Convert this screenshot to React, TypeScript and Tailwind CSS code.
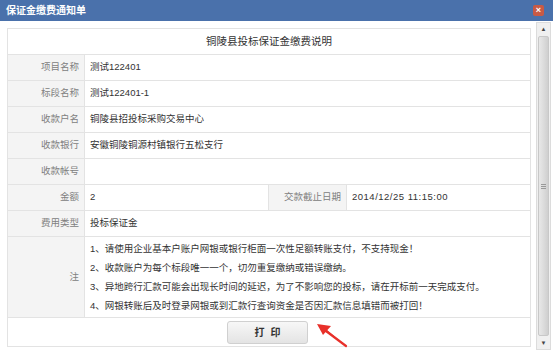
import React from "react"

const rows: { label: string; value: string }[] = [
    { label: "项目名称", value: "测试122401" },
    { label: "标段名称", value: "测试122401-1" },
    { label: "收款户名", value: "铜陵县招投标采购交易中心" },
    { label: "收款银行", value: "安徽铜陵铜源村镇银行五松支行" },
    { label: "收款帐号", value: "" },
]

const notes = [
    "1、请使用企业基本户账户网银或银行柜面一次性足额转账支付，不支持现金！",
    "2、收款账户为每个标段唯一一个，切勿重复缴纳或错误缴纳。",
    "3、异地跨行汇款可能会出现长时间的延迟，为了不影响您的投标，请在开标前一天完成支付。",
    "4、网银转账后及时登录网银或到汇款行查询资金是否因汇款信息填错而被打回！",
]

const labelCls = "bg-[#f4f4f4] text-[#808080] text-right pr-[5px] border border-[#e3e3e3] font-normal"
const valueCls = "text-[#333] pl-[5px] border border-[#e3e3e3]"

export default function App() {
    return (
        <div
            className="w-[553px] h-[352px] flex flex-col bg-white overflow-hidden relative"
            style={{ fontFamily: '"Liberation Sans", "Noto Sans CJK SC", sans-serif' }}
        >
            <div className="h-[21px] bg-[#4a71ab] flex items-center justify-between pl-[6px] pr-[9px] shrink-0">
                <span className="text-white text-[10px] font-bold">保证金缴费通知单</span>
                <span className="w-[11px] h-[11px] rounded-[2px] bg-[#c85a45] flex items-center justify-center text-white text-[9px] font-bold leading-none">
                    ×
                </span>
            </div>
            <div className="flex flex-1 min-h-0 bg-white">
                <div className="flex-1 pl-[7px] pt-[7px] pr-[5px]">
                    <table className="w-[524px] border-collapse text-[9.5px] table-fixed">
                        <colgroup>
                            <col className="w-[77px]" />
                            <col className="w-[184px]" />
                            <col className="w-[78px]" />
                            <col />
                        </colgroup>
                        <tbody>
                            <tr className="h-[26px]">
                                <td colSpan={4} className="text-center text-[#333] text-[10.5px] border border-[#e3e3e3]">
                                    铜陵县投标保证金缴费说明
                                </td>
                            </tr>
                            {rows.map((r) => (
                                <tr key={r.label} className="h-[26px]">
                                    <td className={labelCls}>{r.label}</td>
                                    <td colSpan={3} className={valueCls}>{r.value}</td>
                                </tr>
                            ))}
                            <tr className="h-[26px]">
                                <td className={labelCls}>金额</td>
                                <td className={valueCls}>2</td>
                                <td className={labelCls + " whitespace-nowrap"}>交款截止日期</td>
                                <td className={valueCls + " tracking-[0.5px]"}>2014/12/25 11:15:00</td>
                            </tr>
                            <tr className="h-[26px]">
                                <td className={labelCls}>费用类型</td>
                                <td colSpan={3} className={valueCls}>投标保证金</td>
                            </tr>
                            <tr className="h-[79px]">
                                <td className={labelCls}>注</td>
                                <td colSpan={3} className={valueCls + " py-[2px]"}>
                                    {notes.map((n) => (
                                        <div key={n} className="leading-[19px] whitespace-nowrap">{n}</div>
                                    ))}
                                </td>
                            </tr>
                            <tr className="h-[29px]">
                                <td colSpan={4} className="border border-[#e3e3e3]">
                                    <div className="flex justify-center">
                                        <button
                                            type="button"
                                            className="w-[81px] h-[23px] mr-[3px] rounded-[3px] border border-[#d0d0d0] bg-gradient-to-b from-[#f7f7f7] to-[#e4e4e4] text-[10px] font-bold text-[#333] tracking-[6px] pl-[6px]"
                                        >
                                            打印
                                        </button>
                                    </div>
                                </td>
                            </tr>
                        </tbody>
                    </table>
                </div>
                <div className="w-[15px] mr-[2px] mt-[1px] mb-[2px] bg-[#f0f0f0] border border-[#dcdcdc] flex flex-col items-center">
                    <div className="h-[12px] flex items-center justify-center text-[6px] text-[#444]">▲</div>
                    <div className="w-[11px] flex-1 my-[1px] rounded-[2px] border border-[#c8c8c8] bg-gradient-to-r from-[#e8e8e8] via-[#dcdcdc] to-[#cfcfcf] flex items-center justify-center">
                        <div className="flex flex-col gap-[1px]">
                            <div className="w-[5px] h-px bg-[#999]" />
                            <div className="w-[5px] h-px bg-[#999]" />
                            <div className="w-[5px] h-px bg-[#999]" />
                        </div>
                    </div>
                    <div className="h-[12px] flex items-center justify-center text-[6px] text-[#444]">▼</div>
                </div>
            </div>
            <svg className="absolute left-[312px] top-[320px]" width="40" height="28" viewBox="0 0 40 28">
                <path d="M34 26 L31 23 L14 12 L15 10 Z" fill="#e8302a" />
                <path d="M34 26 L14 11" stroke="#e8302a" strokeWidth="2.2" strokeLinecap="round" />
                <path d="M5 4 L19 6 L11 15 Z" fill="#e8302a" />
            </svg>
        </div>
    )
}
